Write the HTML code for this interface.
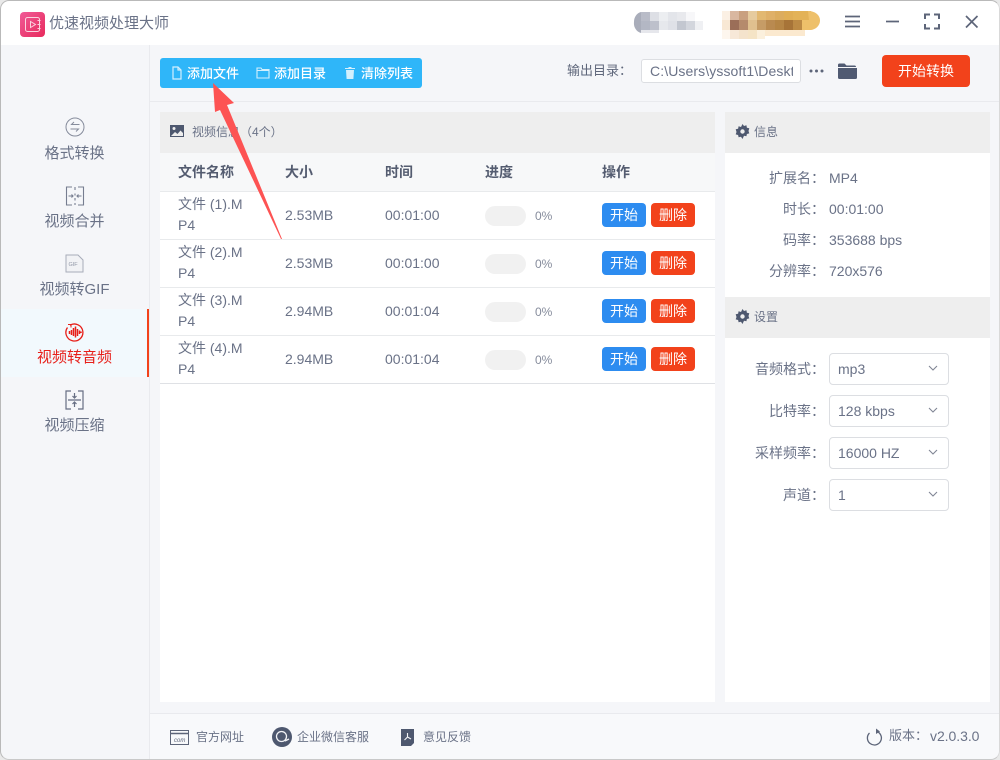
<!DOCTYPE html>
<html lang="zh"><head><meta charset="utf-8"><title>优速视频处理大师</title>
<style>
*{box-sizing:border-box}
html,body{margin:0;padding:0;width:1000px;height:760px;overflow:hidden;background:#e9e9e9}
body{font-family:"Liberation Sans","Noto Sans CJK SC",sans-serif;color:#5a6378;position:relative}
.a{position:absolute;white-space:nowrap}
.win{position:absolute;left:0;top:0;width:1000px;height:760px;background:#f5f6f9;border-radius:9px;overflow:hidden}
.nav{position:absolute;left:0;width:147px;text-align:center;font-size:15px;line-height:20px;color:#6a7287}
.th{font-size:14px;font-weight:700;color:#545c70;top:162px;line-height:20px}
.c{font-size:14px;color:#6a7287;line-height:21px}
.btn{position:absolute;width:44px;height:24px;border-radius:4px;color:#fff;font-size:14px;line-height:24px;text-align:center}
.lb{position:absolute;width:100px;left:725px;text-align:right;font-size:14px;color:#6a7287;line-height:20px;white-space:nowrap}
.lb2{position:absolute;left:829px;font-size:14px;color:#6a7287;line-height:20px;white-space:nowrap}
.sel{position:absolute;left:829px;width:120px;height:32px;border:1px solid #dcdee2;border-radius:4px;background:#fff;font-size:14px;line-height:30px;padding-left:8px;color:#6a7287}
.sel svg{position:absolute;left:98px;top:11px}
.ft{font-size:12px;color:#6a7287;line-height:18px;top:728px}
</style></head><body>
<div class="win">
<div class="a" style="left:0;top:0;width:1000px;height:45px;background:#fff"></div>
<svg class="a" style="left:20px;top:12px" width="25" height="25" viewBox="0 0 25 25"><defs><linearGradient id="g" x1="0" y1="0" x2="1" y2="1"><stop offset="0" stop-color="#f05a97"/><stop offset="1" stop-color="#e82a5c"/></linearGradient></defs><rect width="25" height="25" rx="4" fill="url(#g)"/><rect x="5.500" y="5.500" width="14" height="14" rx="2" fill="none" stroke="#fbd3df" stroke-width="1"/><path d="M10.500 9.500v6l5-3z" fill="none" stroke="#fbd3df" stroke-width="1"/><path d="M17.500 8.500h3M17.500 12.500h3M17.500 16.500h3" stroke="#fbd3df" stroke-width="1"/></svg>
<div class="a" style="left:49px;top:13px;font-size:15px;line-height:22px;color:#6a7287">优速视频处理大师</div>

<svg class="a" style="left:630px;top:8px" width="195" height="36" viewBox="630 8 195 36">
<path d="M643 12h-2a9 10 0 0 0-7 10 9 10 0 0 0 7 11h2z" fill="#a9adba"/>
<g shape-rendering="crispEdges"><rect x="641" y="12" width="9" height="9" fill="#b9bcc8"/><rect x="650" y="12" width="9" height="9" fill="#dddfe5"/><rect x="659" y="12" width="9" height="9" fill="#eceef1"/><rect x="668" y="12" width="9" height="9" fill="#e3e5ea"/><rect x="677" y="12" width="9" height="9" fill="#e8e9ed"/><rect x="686" y="12" width="9" height="9" fill="#f7f7f9"/>
<rect x="641" y="21" width="9" height="9" fill="#b3b7c4"/><rect x="650" y="21" width="9" height="9" fill="#bdc0cb"/><rect x="659" y="21" width="9" height="9" fill="#e6e8ec"/><rect x="668" y="21" width="9" height="9" fill="#dfe1e7"/><rect x="677" y="21" width="9" height="9" fill="#c3c7d0"/><rect x="686" y="21" width="9" height="9" fill="#d3d6dd"/><rect x="695" y="21" width="8" height="9" fill="#eff0f3"/>
<rect x="641" y="30" width="18" height="3" fill="#e6e7ec"/>
<rect x="722" y="11" width="8" height="9" fill="#fbf0e4"/><rect x="730" y="11" width="9" height="9" fill="#d9b7a0"/><rect x="739" y="11" width="9" height="9" fill="#c9a07f"/><rect x="748" y="11" width="9" height="9" fill="#e6cb9e"/><rect x="757" y="11" width="9" height="9" fill="#e2b871"/><rect x="766" y="11" width="9" height="9" fill="#dfb068"/><rect x="775" y="11" width="9" height="9" fill="#dcac5e"/><rect x="784" y="11" width="9" height="9" fill="#e0ae55"/><rect x="793" y="11" width="18" height="9" fill="#e3b257"/>
<rect x="722" y="20" width="8" height="10" fill="#f8e8d4"/><rect x="730" y="20" width="9" height="10" fill="#9b6e58"/><rect x="739" y="20" width="9" height="10" fill="#b58a6c"/><rect x="748" y="20" width="9" height="10" fill="#e0c08f"/><rect x="757" y="20" width="9" height="10" fill="#c69c66"/><rect x="766" y="20" width="9" height="10" fill="#b98a50"/><rect x="775" y="20" width="9" height="10" fill="#b58545"/><rect x="784" y="20" width="9" height="10" fill="#a77438"/><rect x="793" y="20" width="9" height="10" fill="#bc8a45"/><rect x="802" y="20" width="9" height="10" fill="#eec06a"/>
<rect x="722" y="30" width="8" height="9" fill="#fdf6ee"/><rect x="730" y="30" width="9" height="9" fill="#f7e8d8"/><rect x="739" y="30" width="9" height="9" fill="#f4e3cc"/><rect x="748" y="30" width="9" height="9" fill="#f5e4c6"/><rect x="757" y="30" width="8" height="9" fill="#fbf0dd"/><rect x="765" y="30" width="40" height="6" fill="#fbe9cf"/></g>
<path d="M808 11c7 0 12 4 12 9.500s-5 9.500-10 9.500z" fill="#eec06a"/></svg>

<svg class="a" style="left:844px;top:12px" width="140" height="20" viewBox="844 12 140 20" fill="none" stroke="#5d6579">
<path d="M845 16.500h15M845 21.500h15M845 26.500h15" stroke-width="1.700"/>
<path d="M886 21.500h13" stroke-width="1.700"/>
<path d="M925 19v-4.500h5M934 14.500h5v4.500M925 24v4.500h5M934 28.500h5V24" stroke-width="2"/>
<path d="M966 16l11.500 11.500M977.500 16L966 27.500" stroke-width="1.700"/></svg>

<div class="a" style="left:149px;top:45px;width:1px;height:715px;background:#e9eaee"></div>
<div class="a" style="left:150px;top:101px;width:850px;height:1px;background:#e9eaee"></div>

<div class="a" style="left:0;top:309px;width:147px;height:68px;background:#f2f9fd"></div>
<div class="a" style="left:147px;top:309px;width:2px;height:68px;background:#f2421b"></div>

<svg class="a" style="left:64px;top:116px" width="22" height="22" viewBox="0 0 22 22" fill="none" stroke="#868c9c"><circle cx="11" cy="11" r="9"/><path d="M15.500 8.500H7.500l2.500-2.500M6.500 13H14.500l-2.500 2.500"/></svg>
<div class="nav" style="left:1px;top:144px">格式转换</div>
<svg class="a" style="left:65px;top:186px" width="20" height="20" viewBox="0 0 20 20" fill="none" stroke="#767d90" stroke-width="1.100"><path d="M7 1H1.500v18H7M13 1h5.500v18H13M10 1v3M10 7.500v2M10 12v2.500M10 17v2"/><path d="M3.500 10H8M6.500 8.500L8 10l-1.500 1.500M16.500 10H12M13.500 8.500L12 10l1.500 1.500"/></svg>
<div class="nav" style="left:1px;top:212px">视频合并</div>
<svg class="a" style="left:65px;top:254px" width="19" height="19" viewBox="0 0 19 19" fill="#f1f2f5" stroke="#a7acb9"><path d="M1 1h12l5 5v12H1z"/><text x="3.500" y="12" font-size="5.500" fill="#9096a6" stroke="none" font-family="Liberation Sans">GIF</text></svg>
<div class="nav" style="left:1px;top:280px">视频转GIF</div>
<svg class="a" style="left:65px;top:322px" width="20" height="20" viewBox="0 0 20 20" fill="none" stroke="#e71f19"><path d="M5 3.200A8.500 8.500 0 1 1 2.500 5.500" stroke-width="1.300"/><path d="M3 2.500h3v3" stroke-width="1"/><path d="M4.500 9v3M6.500 8v5M8.500 6v8M10.500 4.500v11M12.500 7v7M14.500 8.500v3.500M16 9.500v1.500" stroke-width="1.500"/></svg>
<div class="nav" style="left:1px;top:348px;color:#e71f19">视频转音频</div>
<svg class="a" style="left:65px;top:390px" width="19" height="20" viewBox="0 0 19 20" fill="none" stroke="#666e83" stroke-width="1.200"><path d="M6 1H1v18h5M13 1h5v18h-5"/><path d="M3 10h13M9.500 3v5M7.500 6l2 2 2-2M9.500 17v-5M7.500 14l2-2 2 2"/></svg>
<div class="nav" style="left:1px;top:416px">视频压缩</div>

<div class="a" style="left:160px;top:58px;width:262px;height:30px;background:#2fb6f9;border-radius:3px"></div>
<svg class="a" style="left:171px;top:66px" width="12" height="14" viewBox="0 0 12 14" fill="none" stroke="#d3effd" stroke-width="1.200"><path d="M2 1h5l3 3v9H2z"/><path d="M7 1v3h3"/></svg>
<div class="a" style="left:187px;top:64px;color:#fff;font-size:13px;line-height:20px;font-weight:500">添加文件</div>
<svg class="a" style="left:256px;top:66px" width="14" height="13" viewBox="0 0 14 13" fill="none" stroke="#d3effd" stroke-width="1.100"><path d="M1 2h4l1 1.500h7V12H1zM1 4.500h12"/></svg>
<div class="a" style="left:274px;top:64px;color:#fff;font-size:13px;line-height:20px;font-weight:500">添加目录</div>
<svg class="a" style="left:345px;top:67px" width="10" height="12" viewBox="0 0 10 12" fill="#d3effd"><path d="M3.500 0h3v1H10v1H0V1h3.500zM1 3h8l-.6 9H1.600z"/></svg>
<div class="a" style="left:361px;top:64px;color:#fff;font-size:13px;line-height:20px;font-weight:500">清除列表</div>

<div class="a" style="left:567px;top:61px;font-size:13px;line-height:20px;color:#5f677b">输出目录：</div>
<div class="a" style="left:641px;top:59px;width:160px;height:24px;background:#fff;border:1px solid #dcdee2;border-radius:3px;font-size:14px;line-height:23px;padding-left:8px;color:#6a7287;overflow:hidden"><span style="display:block;width:143px;overflow:hidden;letter-spacing:.1px">C:\Users\yssoft1\Desktop</span></div>
<svg class="a" style="left:808px;top:68px" width="17" height="6" viewBox="0 0 17 6" fill="#5d6579"><circle cx="3" cy="3" r="1.500"/><circle cx="8.500" cy="3" r="1.500"/><circle cx="14" cy="3" r="1.500"/></svg>
<svg class="a" style="left:837px;top:62px" width="21" height="18" viewBox="0 0 21 18" fill="#505a72"><path d="M1 3a1.500 1.500 0 0 1 1.500-1.500h5l2 2h8A1.500 1.500 0 0 1 19 5H1z"/><path d="M1 6h19v9.500a1.500 1.500 0 0 1-1.500 1.500h-16A1.500 1.500 0 0 1 1 15.500z"/></svg>
<div class="a" style="left:882px;top:55px;width:88px;height:32px;background:#f2421b;border-radius:4px;color:#fff;font-size:14px;line-height:32px;text-align:center">开始转换</div>

<div class="a" style="left:160px;top:112px;width:555px;height:590px;background:#fff"></div>
<div class="a" style="left:160px;top:112px;width:555px;height:41px;background:#eeeeee"></div>
<svg class="a" style="left:170px;top:124px" width="14" height="14" viewBox="0 0 14 14"><path d="M0 1h14v12H0z" fill="#4e586f"/><circle cx="4" cy="4.500" r="1.500" fill="#eee"/><path d="M1 12l4-4 2.500 2 3-3.500L13 9v3z" fill="#eee"/></svg>
<div class="a" style="left:192px;top:123px;font-size:12px;line-height:18px;color:#6a7287">视频信息（4个）</div>
<div class="a" style="left:160px;top:153px;width:555px;height:38px;background:#f7f8f9"></div>
<div class="a th" style="left:178px">文件名称</div><div class="a th" style="left:285px">大小</div><div class="a th" style="left:385px">时间</div><div class="a th" style="left:485px">进度</div><div class="a th" style="left:602px">操作</div>
<div class="a" style="left:160px;top:191px;width:555px;height:1px;background:#e8eaec"></div>
<div class="a" style="left:160px;top:239px;width:555px;height:1px;background:#e8eaec"></div>
<div class="a" style="left:160px;top:287px;width:555px;height:1px;background:#e8eaec"></div>
<div class="a" style="left:160px;top:335px;width:555px;height:1px;background:#e8eaec"></div>
<div class="a" style="left:160px;top:383px;width:555px;height:1px;background:#dfe1e5"></div>

<div class="a c" style="left:178px;top:194px">文件 (1).M<br>P4</div><div class="a c" style="left:285px;top:205px">2.53MB</div><div class="a c" style="left:385px;top:205px">00:01:00</div>
<div class="a" style="left:485px;top:206px;width:41px;height:20px;background:#f1f1f1;border-radius:10px"></div><div class="a" style="left:535px;top:207px;font-size:12px;line-height:18px;color:#868c9c">0%</div>
<div class="btn" style="left:602px;top:203px;background:#2d8cf0">开始</div><div class="btn" style="left:651px;top:203px;background:#f2421b">删除</div>

<div class="a c" style="left:178px;top:242px">文件 (2).M<br>P4</div><div class="a c" style="left:285px;top:253px">2.53MB</div><div class="a c" style="left:385px;top:253px">00:01:00</div>
<div class="a" style="left:485px;top:254px;width:41px;height:20px;background:#f1f1f1;border-radius:10px"></div><div class="a" style="left:535px;top:255px;font-size:12px;line-height:18px;color:#868c9c">0%</div>
<div class="btn" style="left:602px;top:251px;background:#2d8cf0">开始</div><div class="btn" style="left:651px;top:251px;background:#f2421b">删除</div>

<div class="a c" style="left:178px;top:290px">文件 (3).M<br>P4</div><div class="a c" style="left:285px;top:301px">2.94MB</div><div class="a c" style="left:385px;top:301px">00:01:04</div>
<div class="a" style="left:485px;top:302px;width:41px;height:20px;background:#f1f1f1;border-radius:10px"></div><div class="a" style="left:535px;top:303px;font-size:12px;line-height:18px;color:#868c9c">0%</div>
<div class="btn" style="left:602px;top:299px;background:#2d8cf0">开始</div><div class="btn" style="left:651px;top:299px;background:#f2421b">删除</div>

<div class="a c" style="left:178px;top:338px">文件 (4).M<br>P4</div><div class="a c" style="left:285px;top:349px">2.94MB</div><div class="a c" style="left:385px;top:349px">00:01:04</div>
<div class="a" style="left:485px;top:350px;width:41px;height:20px;background:#f1f1f1;border-radius:10px"></div><div class="a" style="left:535px;top:351px;font-size:12px;line-height:18px;color:#868c9c">0%</div>
<div class="btn" style="left:602px;top:347px;background:#2d8cf0">开始</div><div class="btn" style="left:651px;top:347px;background:#f2421b">删除</div>

<div class="a" style="left:725px;top:112px;width:265px;height:590px;background:#fff"></div>
<div class="a" style="left:725px;top:112px;width:265px;height:41px;background:#eeeeee"></div>
<div class="a" style="left:725px;top:297px;width:265px;height:41px;background:#eeeeee"></div>
<svg class="a" style="left:735px;top:124px" width="15" height="15" viewBox="0 0 15 15"><path d="M6 .5h3l.5 2 1.500.7 1.900-1 2 2.300-1.100 1.800.5 1.500 2 .6v3l-2 .5-.5 1.500 1 1.800-2.100 2.100-1.800-1-1.500.6-.4 2H6l-.5-2-1.500-.6-1.800 1L.1 12.700l1-1.800-.6-1.500-2-.5z" fill="none"/><path d="M7.500 0l1.500 2 2.400-.7.500 2.400 2.400.6-.8 2.700.8 2.400-2.400.6-.5 2.300-2.400-.6L7.500 15 6 12.700l-2.400.6-.5-2.300-2.400-.6.800-2.400-.8-2.700 2.400-.6.500-2.400 2.400.7z" fill="#4e586f"/><circle cx="7.500" cy="7.500" r="2.200" fill="#eee"/></svg>
<div class="a" style="left:754px;top:123px;font-size:12px;line-height:18px;color:#6a7287">信息</div>
<svg class="a" style="left:735px;top:309px" width="15" height="15" viewBox="0 0 15 15"><path d="M7.500 0l1.500 2 2.400-.7.500 2.400 2.400.6-.8 2.700.8 2.400-2.400.6-.5 2.300-2.400-.6L7.500 15 6 12.700l-2.400.6-.5-2.300-2.400-.6.800-2.400-.8-2.700 2.400-.6.500-2.400 2.400.7z" fill="#4e586f"/><circle cx="7.500" cy="7.500" r="2.200" fill="#eee"/></svg>
<div class="a" style="left:754px;top:308px;font-size:12px;line-height:18px;color:#6a7287">设置</div>

<div class="lb" style="top:168px">扩展名：</div><div class="lb2" style="top:168px">MP4</div>
<div class="lb" style="top:199px">时长：</div><div class="lb2" style="top:199px">00:01:00</div>
<div class="lb" style="top:230px">码率：</div><div class="lb2" style="top:230px">353688 bps</div>
<div class="lb" style="top:261px">分辨率：</div><div class="lb2" style="top:261px">720x576</div>

<div class="lb" style="top:359px">音频格式：</div>
<div class="sel" style="top:353px">mp3<svg width="10" height="7" viewBox="0 0 10 7" fill="none" stroke="#808695" stroke-width="1.100"><path d="M1 1l4 4 4-4"/></svg></div>
<div class="lb" style="top:401px">比特率：</div>
<div class="sel" style="top:395px">128 kbps<svg width="10" height="7" viewBox="0 0 10 7" fill="none" stroke="#808695" stroke-width="1.100"><path d="M1 1l4 4 4-4"/></svg></div>
<div class="lb" style="top:443px">采样频率：</div>
<div class="sel" style="top:437px">16000 HZ<svg width="10" height="7" viewBox="0 0 10 7" fill="none" stroke="#808695" stroke-width="1.100"><path d="M1 1l4 4 4-4"/></svg></div>
<div class="lb" style="top:485px">声道：</div>
<div class="sel" style="top:479px">1<svg width="10" height="7" viewBox="0 0 10 7" fill="none" stroke="#808695" stroke-width="1.100"><path d="M1 1l4 4 4-4"/></svg></div>

<div class="a" style="left:150px;top:713px;width:850px;height:1px;background:#e9eaee"></div>
<div class="a" style="left:150px;top:714px;width:850px;height:46px;background:#f8f9fb"></div>
<svg class="a" style="left:170px;top:730px" width="20" height="15" viewBox="0 0 20 15" fill="none" stroke="#5d6579"><rect x=".5" y=".5" width="18" height="14"/><path d="M.5 3.500h18" stroke-width="1.400"/><text x="4" y="12" font-size="6" fill="#5d6579" stroke="none" font-style="italic" font-family="Liberation Sans">com</text></svg>
<div class="a ft" style="left:196px">官方网址</div>
<svg class="a" style="left:272px;top:727px" width="20" height="20" viewBox="0 0 20 20"><circle cx="10" cy="10" r="10" fill="#4e586f"/><circle cx="9.500" cy="9.500" r="5" fill="none" stroke="#f2f3f6" stroke-width="1.300"/><path d="M13 14l4-2" stroke="#f2f3f6" stroke-width="1.300"/></svg>
<div class="a ft" style="left:297px">企业微信客服</div>
<svg class="a" style="left:401px;top:728px" width="14" height="19" viewBox="0 0 14 19"><path d="M0 1h13v14l-3 3H0z" fill="#4e586f"/><path d="M6.500 5v4L3.500 12M6.500 9l3.500 2" stroke="#f2f3f6" stroke-width="1.100" fill="none"/></svg>
<div class="a ft" style="left:423px">意见反馈</div>
<svg class="a" style="left:866px;top:728px" width="17" height="18" viewBox="0 0 17 18" fill="none" stroke="#5d6579" stroke-width="1.300"><path d="M11 3.500a7 7 0 1 1-7.500 1.500"/><path d="M10 .5l4 3-4 2.500z" fill="#5d6579" stroke="none"/></svg>
<div class="a" style="left:889px;top:726px;font-size:13px;line-height:20px;color:#6a7287;width:41px">版本：</div>
<div class="a" style="left:930px;top:726px;font-size:14px;line-height:20px;color:#6a7287;letter-spacing:-.05px">v2.0.3.0</div>

<svg class="a" style="left:205px;top:78px" width="85" height="170" viewBox="205 78 85 170"><polygon points="213,83 234,103 227,105 282,239 281,239 220,110 215,112" fill="#fd5353"/></svg>
</div>
<div class="a" style="left:0;top:0;width:1000px;height:760px;border-radius:9px;border:1px solid #b9b9b9;border-bottom-color:#c9c9c9;border-right-color:#d9d9d9;pointer-events:none"></div>
</body></html>
